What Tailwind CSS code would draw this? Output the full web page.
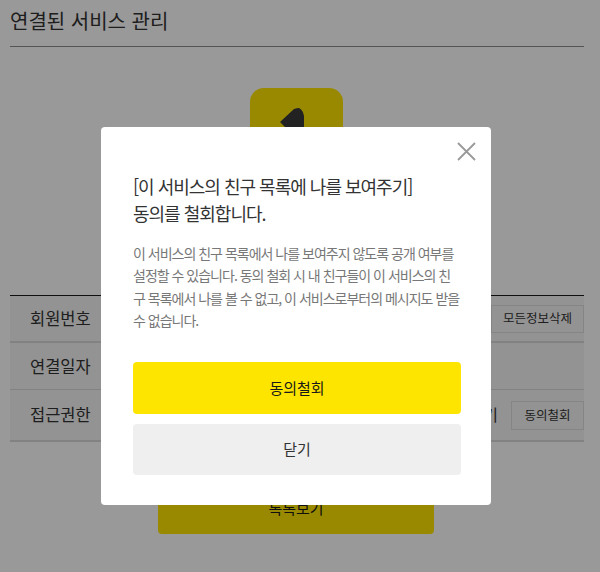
<!DOCTYPE html>
<html lang="ko">
<head>
<meta charset="utf-8">
<script src="https://cdn.jsdelivr.net/npm/@tailwindcss/browser@4"></script>
</head>
<body class="bg-white">
<div class="relative w-[600px] h-[572px] overflow-hidden font-['Noto_Sans_CJK_KR','Noto_Sans',sans-serif] text-[#191919]">
  <main class="pl-[10px] pr-[16px]">
    <header class="h-[47px] border-b border-[#8c8c8c]">
      <h1 class="text-[20px] leading-[42px] font-normal text-[#333]">연결된 서비스 관리</h1>
    </header>
    <section class="h-[248px] pt-[41px] flex justify-center">
      <div class="w-[93px] h-[93px] mr-[1px] rounded-[14px] bg-[#fee500] flex justify-center">
        <svg class="mt-[20px] ml-[-9px]" width="24" height="52" viewBox="0 0 24 52"><path d="M0 14 L14 1 Q17 0 19 0 Q23 2 24 8 V52 H6 V20 Z" fill="#393939"/></svg>
      </div>
    </section>
    <section class="border-t border-[#191919] text-[#333]">
      <div class="h-[47px] flex items-center bg-[#f5f5f5] border-b-2 border-[#d9d9d9] pl-[20px]">
        <span class="text-[16.5px]">회원번호</span>
        <button class="ml-auto h-[28px] w-[93px] border border-[#dedede] text-[12.5px] bg-[#f5f5f5]">모든정보삭제</button>
      </div>
      <div class="h-[47px] flex items-center bg-[#f5f5f5] border-b border-[#d9d9d9] pl-[20px]">
        <span class="text-[16.5px]">연결일자</span>
      </div>
      <div class="h-[52px] flex items-center bg-[#f5f5f5] border-b-2 border-[#d9d9d9] pl-[20px]">
        <span class="text-[16.5px] pb-[2px]">접근권한</span>
        <span class="ml-auto text-[16px] mr-[13px] pb-[2px]">보기</span>
        <button class="h-[29px] w-[73px] border border-[#dedede] text-[12.5px] bg-[#f5f5f5]">동의철회</button>
      </div>
    </section>
    <div class="flex justify-center pt-[40px]">
      <button class="w-[276px] h-[52px] mr-[2px] rounded-[4px] bg-[#fee500] text-[15px] text-[#191919]">톡톡보기</button>
    </div>
  </main>

  <div class="absolute inset-0 bg-black/40"></div>

  <div class="absolute left-[101px] top-[127px] w-[390px] h-[378px] bg-white rounded-[4px] pl-[32px] pr-[30px] pt-[46px]">
    <button class="absolute right-[15px] top-[15px]" aria-label="닫기">
      <svg class="block" width="19" height="19" viewBox="0 0 19 19"><path d="M1 1 L18 18 M18 1 L1 18" stroke="#999" stroke-width="1.8" fill="none"/></svg>
    </button>
    <h2 class="text-[18px] leading-[27px] font-normal text-[#333] tracking-[-1px]">[이 서비스의 친구 목록에 나를 보여주기]<br>동의를 철회합니다.</h2>
    <p class="mt-[15px] text-[14px] leading-[22.4px] text-[#777] tracking-[-1px] break-all">이 서비스의 친구 목록에서 나를 보여주지 않도록 공개 여부를 설정할 수 있습니다. 동의 철회 시 내 친구들이 이 서비스의 친구 목록에서 나를 볼 수 없고, 이 서비스로부터의 메시지도 받을 수 없습니다.</p>
    <div class="mt-[30.4px] flex flex-col gap-[10px]">
      <button class="h-[52px] rounded-[4px] bg-[#fee500] text-[15px] text-[#191919]">동의철회</button>
      <button class="h-[51px] rounded-[4px] bg-[#efefef] text-[15px] text-[#333]">닫기</button>
    </div>
  </div>
</div>
</body>
</html>
